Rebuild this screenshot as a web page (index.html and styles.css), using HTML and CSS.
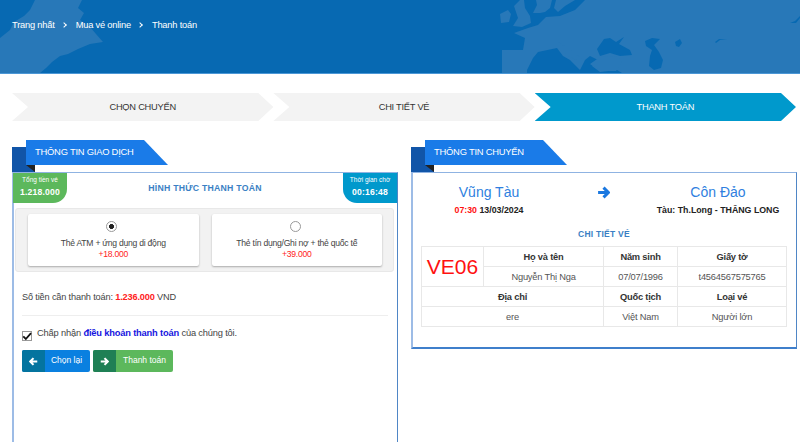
FILE: index.html
```html
<!DOCTYPE html>
<html lang="vi">
<head>
  <meta charset="UTF-8" />
  <title>Thanh toán</title>
  <link rel="stylesheet" href="styles.css">
</head>
<body>

  <!-- Banner -->
  <header class="banner">
    <svg class="banner-map" viewBox="0 0 800 73" aria-hidden="true">
      <path d="M0 73V38L10 30 14 22 24 16 30 10 35 0H82L78 8 84 13 80 20 90 27 96 34 103 42 90 44 78 49 68 54 60 56 52 62 46 68 40 73Z"/>
      <path d="M500 14L508 10 511 14 509 22 501 23ZM514 6L520 0H524L525 8 530 16 531 23 522 27 513 26 518 18 516 12ZM533 13L537 5 536 0H552L550 8 545 12 540 13ZM556 0H575L565 6 558 12 554 8ZM502 72V50H523L525 38 514 33 528 28 538 25 546 17 560 16 575 10 585 0H800V73H502Z"/>
      <path class="sea" d="M527 70L533 58 538 52 557 48 563 56 570 60 580 70 585 60 590 56 598 60 592 66 600 72 617 70 622 73H527Z"/>
      <path class="land" d="M558 42L566 47 575 54 582 58 577 60 568 56 560 50ZM590 64L600 57 618 56 622 62 616 71 600 71Z"/>
      <path class="sea" d="M597 49L604 39 610 38 616 42 624 37 619 44 630 50 632 55 620 56 610 53 600 56ZM645 41L652 38 660 39 654 45 659 52 663 60 661 68 654 70 649 66 650 56 652 50 646 46ZM675 42L680 39 682 43 679 47 676 46ZM715 42L719 39 727 40 720 40 716 43ZM790 23L795 21 800 16V18L796 23Z"/>
    </svg>
    <nav class="crumbs">
      <span>Trang nhất</span><i class="sep"></i><span>Mua vé online</span><i class="sep"></i><span>Thanh toán</span>
    </nav>
  </header>

  <!-- Steps -->
  <div class="steps">
    <div class="step">CHỌN CHUYẾN</div>
    <div class="step">CHI TIẾT VÉ</div>
    <div class="step active">THANH TOÁN</div>
  </div>

  <div class="columns">

    <!-- Left panel -->
    <section class="panel panel-pay">
      <div class="ribbon"><span>THÔNG TIN GIAO DỊCH</span></div>
      <div class="panel-box">
        <div class="pay-head">
          <div class="badge badge-total">
            <small>Tổng tiền vé</small>
            <b>1.218.000</b>
          </div>
          <h3 class="section-title">HÌNH THỨC THANH TOÁN</h3>
          <div class="badge badge-time">
            <small>Thời gian chờ</small>
            <b>00:16:48</b>
          </div>
        </div>

        <div class="methods">
          <div class="method">
            <span class="radio checked"></span>
            <p>Thẻ ATM + ứng dụng di động</p>
            <p class="fee">+18.000</p>
          </div>
          <div class="method">
            <span class="radio"></span>
            <p>Thẻ tín dụng/Ghi nợ + thẻ quốc tế</p>
            <p class="fee">+39.000</p>
          </div>
        </div>

        <p class="amount">Số tiền cần thanh toán: <b>1.236.000</b> VND</p>

        <label class="terms">
          <span class="check">
            <svg viewBox="0 0 12 12"><path d="M1.5 6.5 4.6 9.6 10.8 2.6" fill="none" stroke="#111" stroke-width="2.2"/></svg>
          </span>
          <span>Chấp nhận <b>điều khoản thanh toán</b> của chúng tôi.</span>
        </label>

        <div class="actions">
          <button class="btn btn-back">
            <span class="btn-icon"><svg viewBox="0 0 12 12"><path d="M6 1.5 1.5 6 6 10.5M2 6H11" fill="none" stroke="#fff" stroke-width="2.8"/></svg></span>
            <span class="btn-text">Chọn lại</span>
          </button>
          <button class="btn btn-pay">
            <span class="btn-icon"><svg viewBox="0 0 12 12"><path d="M6 1.5 10.5 6 6 10.5M10 6H1" fill="none" stroke="#fff" stroke-width="2.8"/></svg></span>
            <span class="btn-text">Thanh toán</span>
          </button>
        </div>
      </div>
    </section>

    <!-- Right panel -->
    <section class="panel panel-trip">
      <div class="ribbon"><span>THÔNG TIN CHUYẾN</span></div>
      <div class="panel-box">
        <div class="route">
          <div class="route-side">
            <div class="city">Vũng Tàu</div>
            <div class="route-info"><em>07:30</em> 13/03/2024</div>
          </div>
          <svg class="route-arrow" viewBox="0 0 12 12"><path d="M6 1.5 10.5 6 6 10.5M10 6H1" fill="none" stroke="#1a78e0" stroke-width="2.8"/></svg>
          <div class="route-side">
            <div class="city">Côn Đảo</div>
            <div class="route-info">Tàu: Th.Long - THĂNG LONG</div>
          </div>
        </div>

        <h3 class="section-title center">CHI TIẾT VÉ</h3>

        <table class="ticket">
          <colgroup>
            <col class="c1"><col class="c2"><col class="c3"><col class="c4">
          </colgroup>
          <tr>
            <td rowspan="2" class="code">VE06</td>
            <th>Họ và tên</th>
            <th>Năm sinh</th>
            <th>Giấy tờ</th>
          </tr>
          <tr>
            <td>Nguyễn Thị Nga</td>
            <td>07/07/1996</td>
            <td>t4564567575765</td>
          </tr>
          <tr>
            <th colspan="2">Địa chỉ</th>
            <th>Quốc tịch</th>
            <th>Loại vé</th>
          </tr>
          <tr>
            <td colspan="2">ere</td>
            <td>Việt Nam</td>
            <td>Người lớn</td>
          </tr>
        </table>
      </div>
    </section>

  </div>

</body>
</html>
```

FILE: styles.css
```css
* { margin: 0; padding: 0; box-sizing: border-box; }

html, body {
  height: 442px;
  overflow: hidden;
  background: #fff;
  font-family: "Liberation Sans", Arial, sans-serif;
  font-size: 9px;
  color: #333;
}

/* banner */
.banner {
  position: relative;
  height: 74px;
  background: #0769b2;
  border-bottom: 1px solid #4b97d6;
  overflow: hidden;
}

.banner-map {
  position: absolute;
  top: 0;
  left: 0;
  width: 800px;
  height: 73px;
  fill: #2878b8;
}

.banner-map .sea { fill: #0769b2; }
.banner-map .land { fill: #2878b8; }

.crumbs {
  position: relative;
  display: flex;
  align-items: center;
  padding: 19px 0 0 12px;
  color: #fff;
  font-size: 9.3px;
  letter-spacing: -0.2px;
  line-height: 12px;
}

.sep {
  width: 4px;
  height: 4px;
  margin: 0 10px 0 7px;
  border-top: 1px solid #fff;
  border-right: 1px solid #fff;
  transform: rotate(45deg);
}

/* steps */
.steps {
  display: flex;
  padding: 19px 4px 0 12px;
}

.step {
  flex: 1;
  height: 28px;
  line-height: 28px;
  text-align: center;
  font-size: 9.3px;
  letter-spacing: -0.25px;
  color: #333;
  background: #f3f3f3;
  clip-path: polygon(0 0, calc(100% - 15px) 0, 100% 50%, calc(100% - 15px) 100%, 0 100%, 16px 50%);
}

.step.active {
  background: #0099cc;
  color: #fff;
}

/* panels */
.columns {
  display: flex;
  gap: 13px;
  padding: 19px 3px 0 12px;
}

.panel { flex: 1; min-width: 0; }

.ribbon {
  position: relative;
  height: 32px;
}

/* dark block behind the ribbon */
.ribbon::before {
  content: "";
  position: absolute;
  left: 0;
  top: 7px;
  width: 23px;
  height: 25px;
  background: #1155a8;
}

/* little fold under the ribbon */
.ribbon::after {
  content: "";
  position: absolute;
  left: 14px;
  top: 25px;
  border-top: 7px solid #222;
  border-left: 9px solid transparent;
}

.ribbon span {
  position: absolute;
  z-index: 1;
  left: 14px;
  top: 0;
  width: 142px;
  height: 25px;
  padding-left: 9px;
  line-height: 24px;
  font-size: 9.4px;
  letter-spacing: -0.23px;
  color: #fff;
  background: #1a7be8;
  clip-path: polygon(0 0, 118px 0, 100% 100%, 0 100%);
}

.panel-box {
  border: 1px solid #4f86c6;
  border-top-color: #8fb3e2;
  border-left: 2px solid #9dbce6;
  border-bottom: 2px solid #3f7fcb;
  background: #fff;
}

.panel-pay .panel-box { height: 300px; }

/* left panel */
.pay-head {
  display: flex;
  justify-content: space-between;
  height: 30px;
  margin-left: -1px;
}

.badge {
  width: 54px;
  height: 30px;
  color: #fff;
  background: #5cb85c;
  text-align: center;
  border-bottom-right-radius: 14px;
}

.badge small {
  display: block;
  padding-top: 2px;
  font-size: 6.5px;
  line-height: 10px;
}

.badge b {
  display: block;
  font-size: 8.6px;
  line-height: 15px;
  letter-spacing: 0.2px;
}

.badge-time {
  background: #0099cc;
  border-bottom-right-radius: 0;
  border-bottom-left-radius: 14px;
}

.section-title {
  color: #3a7fc4;
  font-size: 8.7px;
  line-height: 31px;
  letter-spacing: 0.25px;
}

.methods {
  display: flex;
  gap: 13px;
  margin: 5px 3px 0 1px;
  padding: 5px 11px 5px 12px;
  background: #f2f2f2;
  border: 1px solid #e8e8e8;
  border-radius: 3px;
}

.method {
  flex: 1;
  height: 52px;
  padding-top: 7px;
  background: #fff;
  border-radius: 2px;
  box-shadow: 0 1px 2px rgba(0, 0, 0, 0.3);
  text-align: center;
  font-size: 8.6px;
  letter-spacing: -0.25px;
  line-height: 11px;
}

.method p { color: #444; }
.method .fee { color: #f22; }

.radio {
  display: block;
  width: 11px;
  height: 11px;
  margin: 0 0 6px calc(50% - 7px);
  border: 1px solid #999;
  border-radius: 50%;
  background: #fff;
}

.radio.checked {
  background: radial-gradient(circle, #222 0 2.2px, #fff 2.8px);
}

.amount {
  margin: 19px 9px 0 8px;
  padding-bottom: 11px;
  border-bottom: 1px solid #eee;
  font-size: 9.2px;
  letter-spacing: -0.16px;
  line-height: 13px;
  color: #444;
}

.amount b { color: #f22; }

.terms {
  display: flex;
  gap: 5px;
  margin: 11px 8px 0;
  font-size: 9.3px;
  letter-spacing: -0.17px;
  line-height: 13px;
  color: #444;
}

.terms b { color: #1515e0; }

.check {
  width: 10px;
  height: 10px;
  margin-top: 4px;
  border: 1px solid #999;
  background: #fff;
}

.check svg { display: block; width: 10px; height: 10px; margin: -1px 0 0 -1px; }

.actions {
  display: flex;
  gap: 3px;
  margin: 9px 8px 0;
}

.btn {
  display: flex;
  height: 22px;
  border: none;
  border-radius: 2px;
  overflow: hidden;
  font: 8.5px "Liberation Sans", Arial, sans-serif;
  color: #fff;
}

.btn-icon {
  display: flex;
  align-items: center;
  justify-content: center;
  width: 23px;
  height: 22px;
}

.btn-icon svg { width: 9px; height: 9px; }

.btn-text {
  line-height: 20px;
  text-align: center;
}

.btn-back { width: 68px; background: #0a80e0; }
.btn-back .btn-icon { background: #04749f; }
.btn-back .btn-text { width: 43px; }

.btn-pay { width: 80px; background: #5cb85c; }
.btn-pay .btn-icon { background: #1f8055; }
.btn-pay .btn-text { width: 57px; }

/* right panel */
.panel-trip .panel-box { height: 177px; padding: 10px 9px 0 8px; }

.route {
  display: flex;
  justify-content: space-between;
  align-items: flex-start;
}

.route-side {
  width: 136px;
  text-align: center;
}

.route-side:last-child { margin-right: 1px; }

.city {
  font-size: 14px;
  line-height: 19px;
  color: #2f7fe0;
}

.route-info {
  margin-top: 3px;
  font-size: 8.8px;
  line-height: 11px;
  font-weight: bold;
  color: #222;
}

.route-info em { color: #f11; font-style: normal; }

.route-arrow {
  width: 13px;
  height: 13px;
  margin: 3px 0 0 0;
}

.section-title.center {
  margin-top: 10px;
  text-align: center;
  font-size: 8.5px;
  line-height: 16px;
}

.ticket {
  width: 366px;
  margin-top: 4px;
  border-collapse: collapse;
  table-layout: fixed;
  font-size: 9.3px;
  letter-spacing: -0.2px;
}

.ticket .c1 { width: 62px; }
.ticket .c2 { width: 120px; }
.ticket .c3 { width: 74px; }

.ticket th, .ticket td {
  height: 20px;
  border: 1px solid #e8e8e8;
  text-align: center;
  font-weight: normal;
  color: #555;
}

.ticket th { font-weight: bold; color: #333; }

.ticket .code {
  font-size: 21px;
  letter-spacing: 0;
  color: #f11;
}
```
